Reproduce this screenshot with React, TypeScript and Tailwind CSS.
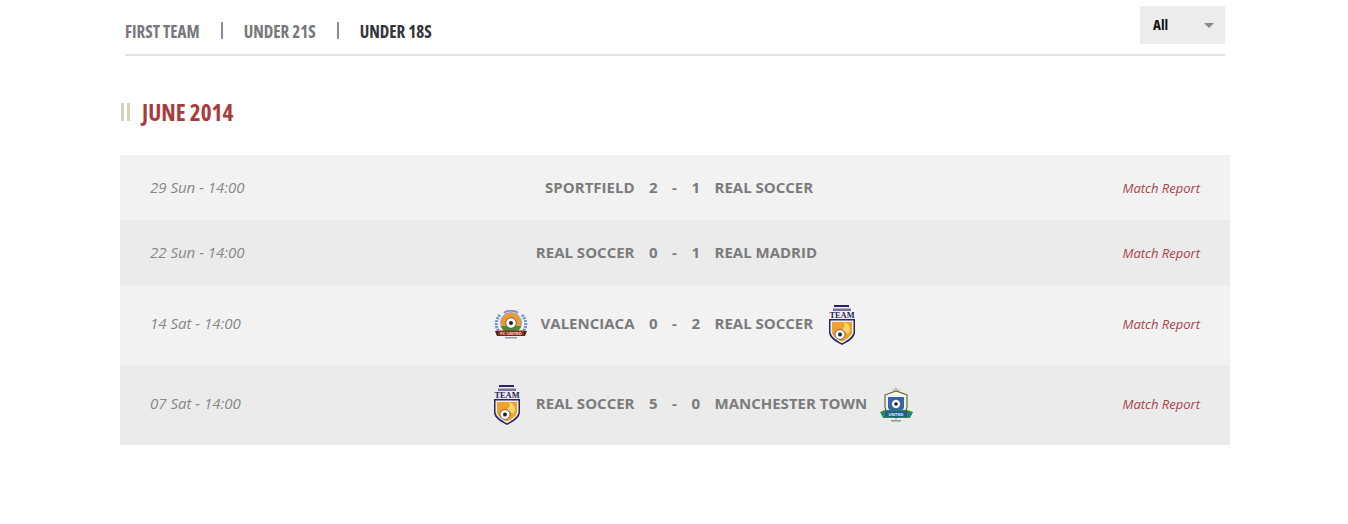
const sans = 'font-["Open_Sans",sans-serif]';

type Crest = 'team' | 'fc' | 'town';

interface Match {
  date: string;
  home: string;
  homeScore: number;
  awayScore: number;
  away: string;
  homeCrest?: Crest;
  awayCrest?: Crest;
}

const matches: Match[] = [
  { date: '29 Sun - 14:00', home: 'SPORTFIELD', homeScore: 2, awayScore: 1, away: 'REAL SOCCER' },
  { date: '22 Sun - 14:00', home: 'REAL SOCCER', homeScore: 0, awayScore: 1, away: 'REAL MADRID' },
  { date: '14 Sat - 14:00', home: 'VALENCIACA', homeScore: 0, awayScore: 2, away: 'REAL SOCCER', homeCrest: 'fc', awayCrest: 'team' },
  { date: '07 Sat - 14:00', home: 'REAL SOCCER', homeScore: 5, awayScore: 0, away: 'MANCHESTER TOWN', homeCrest: 'team', awayCrest: 'town' },
];

function TeamCrest() {
  return (
    <svg width="28" height="40" viewBox="0 0 28 40" className="mx-0.5 shrink-0 translate-y-0.5">
      <rect x="6" y="0" width="15" height="2" fill="#2a2560" />
      <rect x="5" y="3.5" width="18" height="2.5" fill="#77749c" />
      <text x="14" y="13" textAnchor="middle" fontSize="9" fontWeight="800" textLength="25" lengthAdjust="spacingAndGlyphs" fill="#1f1a58" fontFamily="Liberation Serif, serif">TEAM</text>
      <path d="M1 14H27V27C27 33 20 37 14 40C8 37 1 33 1 27Z" fill="#2a2560" />
      <path d="M2.5 15.5H25.5V27C25 32 19 35.5 14 38.3C9 35.5 3 32 2.5 27Z" fill="#f4f1ea" />
      <path d="M4 17H24V27C24 31 18 34.5 14 36.5C10 34.5 4 31 4 27Z" fill="#f0a02c" />
      <path d="M16 17C22 19 24 24 20 29L14 24C17 22 17 20 16 17Z" fill="#f8d76a" />
      <circle cx="12" cy="29.5" r="5" fill="#fff" stroke="#222" strokeWidth="0.6" />
      <circle cx="12" cy="29.5" r="2" fill="#222" />
    </svg>
  );
}

function FcCrest() {
  return (
    <svg width="34" height="30" viewBox="0 0 34 30" className="shrink-0 translate-y-0.5">
      <path d="M6 5C1 10 1 18 6 23" fill="none" stroke="#6f93cf" strokeWidth="3" strokeDasharray="2 1" />
      <path d="M28 5C33 10 33 18 28 23" fill="none" stroke="#6f93cf" strokeWidth="3" strokeDasharray="2 1" />
      <path d="M10 3C13 0 21 0 24 3" fill="none" stroke="#8a93a8" strokeWidth="2" />
      <circle cx="17" cy="13" r="10.5" fill="#ef9a2e" stroke="#8fa6cf" strokeWidth="1" />
      <path d="M7 16H27C26 20 22 23 17 23C12 23 8 20 7 16Z" fill="#3f8f3a" />
      <circle cx="17" cy="13" r="5.2" fill="#fff" stroke="#222" strokeWidth="0.6" />
      <circle cx="17" cy="13" r="2" fill="#222" />
      <path d="M1 21H33L31 26H3Z" fill="#3c2a22" />
      <rect x="4" y="20.5" width="26" height="5" fill="#8f2a1c" />
      <text x="17" y="24.5" textAnchor="middle" fontSize="4" fontWeight="700" fill="#f4e6c8" fontFamily="Liberation Sans, sans-serif">FC UNITED</text>
      <rect x="11" y="27" width="12" height="1.5" fill="#9a9aa2" />
    </svg>
  );
}

function TownCrest() {
  return (
    <svg width="33" height="36" viewBox="0 0 33 36" className="shrink-0 translate-y-0.5">
      <path d="M16 0L17 3H15Z" fill="#6f8a4a" />
      <rect x="12" y="2" width="8" height="1.5" fill="#c8c8b8" />
      <path d="M5 8L16 4L27 8V20C27 25 21 28 16 31C11 28 5 25 5 20Z" fill="#f4f6ee" stroke="#55703a" strokeWidth="1.2" />
      <path d="M8 10H24V20C24 23 20 25 16 26C12 25 8 23 8 20Z" fill="#2f63b5" />
      <circle cx="16" cy="17" r="4.5" fill="#fff" stroke="#222" strokeWidth="0.5" />
      <circle cx="16" cy="17" r="1.8" fill="#222" />
      <path d="M0 25L5 23H27L33 25L30 31H3Z" fill="#2e8a4c" />
      <rect x="5" y="24" width="22" height="6" fill="#1f5f8a" />
      <text x="16" y="28.5" textAnchor="middle" fontSize="4" fontWeight="700" fill="#e8f4f0" fontFamily="Liberation Sans, sans-serif">UNITED</text>
      <rect x="11" y="33" width="10" height="1.5" fill="#8a9a88" />
    </svg>
  );
}

function CrestIcon({ crest }: { crest: Crest }) {
  if (crest === 'team') return <TeamCrest />;
  if (crest === 'fc') return <FcCrest />;
  return <TownCrest />;
}

function MatchRow({ match, striped }: { match: Match; striped: boolean }) {
  const hasCrest = Boolean(match.homeCrest);

  return (
    <div className={`grid grid-cols-[199.5px_1fr_200.5px] items-center px-[30px] ${hasCrest ? 'h-20 pb-1' : 'h-[65px] pb-0.5'} ${striped ? 'bg-[#ebebeb]' : 'bg-[#f2f2f2]'}`}>
      <span className={`text-[15px] italic text-[#888888] ${hasCrest ? '' : 'pt-0.5'}`}>{match.date}</span>

      <div className="grid grid-cols-[1fr_80px_1fr] items-center text-[15px] font-bold leading-5 text-[#7b7b7b]">
        <div className="flex items-center justify-end gap-[13px]">
          {match.homeCrest ? <CrestIcon crest={match.homeCrest} /> : null}
          <span>{match.home}</span>
        </div>
        <div className="flex justify-between px-[14.5px]">
          <span>{match.homeScore}</span>
          <span>-</span>
          <span>{match.awayScore}</span>
        </div>
        <div className="flex items-center gap-[13px]">
          <span>{match.away}</span>
          {match.awayCrest ? <CrestIcon crest={match.awayCrest} /> : null}
        </div>
      </div>

      <span className="pt-1 text-right text-[13px] italic text-[#a8424a]">Match Report</span>
    </div>
  );
}

export default function App() {
  return (
    <div className={`h-[524px] w-full bg-white ${sans}`}>
      <div className="ml-[120px] w-[1110px]">
        <div className="mx-[5px] flex h-14 justify-between border-b-2 border-[#e2e2e2] pt-1.5">
          <nav className="flex items-start pt-[15px] text-[17px] font-bold leading-[22px] [font-stretch:79%]">
            <span className="text-[#77777c]">FIRST TEAM</span>
            <span className="mx-[21px] mt-px h-[17px] w-0.5 bg-[#8a8a9a]" />
            <span className="text-[#77777c]">UNDER 21S</span>
            <span className="mx-[21px] mt-px h-[17px] w-0.5 bg-[#8a8a9a]" />
            <span className="text-[#33333a]">UNDER 18S</span>
          </nav>
          <div className="flex h-[38px] w-[85px] items-center justify-between bg-[#ececec] pl-[13px] pr-[11px]">
            <span className="pb-0.5 text-[15px] font-bold text-[#111111] [font-stretch:78%]">All</span>
            <span className="h-0 w-0 border-x-[5px] border-t-[5px] border-x-transparent border-t-[#888888]" />
          </div>
        </div>

        <div className="flex h-[99px] items-center pl-px pt-[13px]">
          <span className="h-[18px] w-[3px] bg-[#d3d3bd]" />
          <span className="ml-[3px] h-[18px] w-[3px] bg-[#d3d3bd]" />
          <h2 className="ml-[12px] text-[23.25px] font-bold leading-8 text-[#a83c3c] [font-stretch:75%]">JUNE 2014</h2>
        </div>

        <div>
          {matches.map((match, index) => (
            <MatchRow key={match.date} match={match} striped={index % 2 === 1} />
          ))}
        </div>
      </div>
    </div>
  );
}
